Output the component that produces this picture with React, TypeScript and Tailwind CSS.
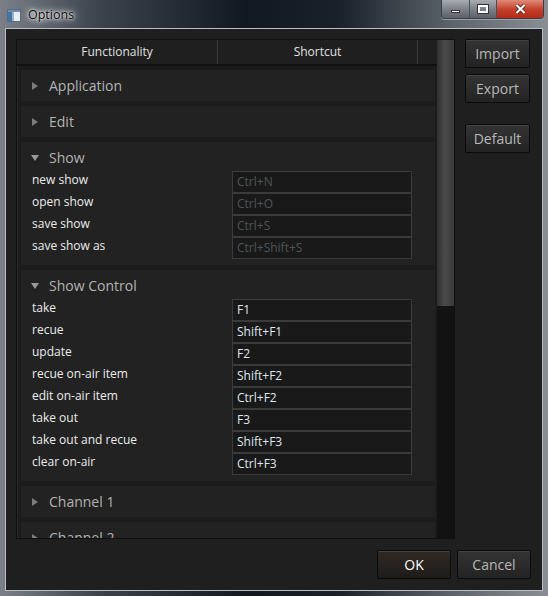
import { ReactNode } from "react";

type Row = { label: string; keys: string; disabled?: boolean };
type Group = { name: string; open?: boolean; rows?: Row[] };

const GROUPS: Group[] = [
  { name: "Application" },
  { name: "Edit" },
  {
    name: "Show",
    open: true,
    rows: [
      { label: "new show", keys: "Ctrl+N", disabled: true },
      { label: "open show", keys: "Ctrl+O", disabled: true },
      { label: "save show", keys: "Ctrl+S", disabled: true },
      { label: "save show as", keys: "Ctrl+Shift+S", disabled: true },
    ],
  },
  {
    name: "Show Control",
    open: true,
    rows: [
      { label: "take", keys: "F1" },
      { label: "recue", keys: "Shift+F1" },
      { label: "update", keys: "F2" },
      { label: "recue on-air item", keys: "Shift+F2" },
      { label: "edit on-air item", keys: "Ctrl+F2" },
      { label: "take out", keys: "F3" },
      { label: "take out and recue", keys: "Shift+F3" },
      { label: "clear on-air", keys: "Ctrl+F3" },
    ],
  },
  { name: "Channel 1" },
  { name: "Channel 2" },
];

function Arrow({ open }: { open?: boolean }) {
  return (
    <svg width="8" height="8" viewBox="0 0 8 8" className="shrink-0">
      {open ? (
        <polygon points="0,1 8,1 4,7" fill="#9a9a9a" />
      ) : (
        <polygon points="1,0 7,4 1,8" fill="#7c7c7c" />
      )}
    </svg>
  );
}

function SideButton({ children, className = "" }: { children: ReactNode; className?: string }) {
  return (
    <button
      type="button"
      className={`flex h-[29px] w-[65px] items-center justify-center rounded-[2px] border border-[#0b0b0b] bg-gradient-to-b from-[#343434] to-[#232323] text-[14px] text-[#b7b7b7] shadow-[inset_0_1px_0_#444] ${className}`}
    >
      {children}
    </button>
  );
}

function GroupBox({ group }: { group: Group }) {
  return (
    <div className="mb-[3px] border border-[#1b1b1b] bg-[#222222] shadow-[0_0_0_1px_#1d1d1d]">
      <div className="flex h-[31px] items-center gap-[10px] pl-[10px] text-[14px] text-[#b3b3b3]">
        <Arrow open={group.open} />
        <span>{group.name}</span>
      </div>
      {group.rows && (
        <div className="-mt-[2px] pb-[6px]">
          {group.rows.map((r) => (
            <div key={r.label} className="flex h-[22px] items-start">
              <span className="w-[211px] pl-[11px] pt-[1px] text-[12px] leading-[15px] text-[#ececec]">
                {r.label}
              </span>
              <div
                className={`flex h-[22px] w-[180px] items-center border border-[#3b3b3b] bg-[#191919] pl-[4px] text-[12px] ${
                  r.disabled ? "text-[#4d5458]" : "text-[#dfe6ee]"
                }`}
              >
                {r.keys}
              </div>
            </div>
          ))}
        </div>
      )}
    </div>
  );
}

function TitleBar() {
  return (
    <div className="flex h-[28px] items-start justify-between">
      <div className="flex items-center gap-[7px] pl-[2px] pt-[6px]">
        <svg width="14" height="13" viewBox="0 0 14 13">
          <rect x="0.5" y="0.5" width="13" height="12" fill="#e9edf2" stroke="#5b6a7b" />
          <rect x="1" y="1" width="12" height="2" fill="#6c8fb5" />
          <rect x="1" y="3" width="4" height="9" fill="#3f76a8" />
          <rect x="5" y="3" width="2" height="9" fill="#9db0c4" />
        </svg>
        <span className="text-[12.5px] text-[#050505] [text-shadow:0_0_8px_#fff,0_0_5px_#fff,0_0_2px_#fff]">
          Options
        </span>
      </div>
      <div className="-mr-[1px] flex h-[19px] overflow-hidden rounded-b-[4px] border border-t-0 border-[#3b4048] shadow-[0_1px_0_#9aa0a8]">
        <div className="flex w-[28px] items-center justify-center border-r border-[#4a4f56] bg-gradient-to-b from-[#a9adb3] via-[#7d828a] to-[#5c6169]">
          <div className="mt-[4px] h-[3px] w-[9px] border border-[#333] bg-white" />
        </div>
        <div className="flex w-[27px] items-center justify-center border-r border-[#4a4f56] bg-gradient-to-b from-[#a9adb3] via-[#7d828a] to-[#5c6169]">
          <div className="h-[8px] w-[10px] border-2 border-white outline outline-1 outline-[#333]" />
        </div>
        <div className="flex w-[46px] items-center justify-center bg-gradient-to-b from-[#e08a7a] via-[#c4412c] to-[#b22a14]">
          <svg width="11" height="10" viewBox="0 0 11 10">
            <path d="M1.5 1 L9.5 9 M9.5 1 L1.5 9" stroke="#3a1a12" strokeWidth="3.6" />
            <path d="M1.5 1 L9.5 9 M9.5 1 L1.5 9" stroke="#ffffff" strokeWidth="2.2" />
          </svg>
        </div>
      </div>
    </div>
  );
}

export default function App() {
  return (
    <div
      className="h-[596px] w-[548px] overflow-hidden bg-[linear-gradient(90deg,#7b8088_0%,#3c434c_18%,#111821_45%,#1a212a_62%,#5c626a_82%,#8a8e94_100%)] px-[5px] pb-[5px] [font-family:'Open_Sans','Noto_Sans',sans-serif]"
    >
      <TitleBar />
      <div className="flex h-[563px] flex-col border border-[#b9bec4] bg-[#1f1f1f] p-[10px]">
        <div className="flex gap-[10px]">
          <div className="flex h-[500px] w-[439px] border border-[#101010] bg-[#1b1b1b] shadow-[inset_0_0_0_1px_#2a2a2a]">
            <div className="flex w-[420px] flex-col">
              <div className="flex h-[26px] shrink-0 border-b-2 border-[#111] bg-[#1f1f1f] text-[12px] text-[#e0e0e0]">
                <div className="flex w-[201px] items-center justify-center border-r border-[#383838]">
                  Functionality
                </div>
                <div className="flex w-[200px] items-center justify-center border-r border-[#383838]">
                  Shortcut
                </div>
                <div className="flex-1" />
              </div>
              <div className="flex-1 overflow-hidden pl-[3px] pr-[1px] pt-[3px]">
                {GROUPS.map((g) => (
                  <GroupBox key={g.name} group={g} />
                ))}
              </div>
            </div>
            <div className="flex w-[17px] flex-col bg-[#121212]">
              <div className="h-[266px] bg-[linear-gradient(90deg,#2f2f2f,#4a4a4a_45%,#3a3a3a)]" />
            </div>
          </div>
          <div className="flex flex-col">
            <SideButton>Import</SideButton>
            <SideButton className="mt-[6px]">Export</SideButton>
            <SideButton className="mt-[21px]">Default</SideButton>
          </div>
        </div>
        <div className="mt-[11px] flex justify-end gap-[6px] pr-[1px]">
          <SideButton className="!w-[74px] !from-[#302a26] !to-[#1f1b18] !text-white">OK</SideButton>
          <SideButton className="!w-[74px]">Cancel</SideButton>
        </div>
      </div>
    </div>
  );
}
